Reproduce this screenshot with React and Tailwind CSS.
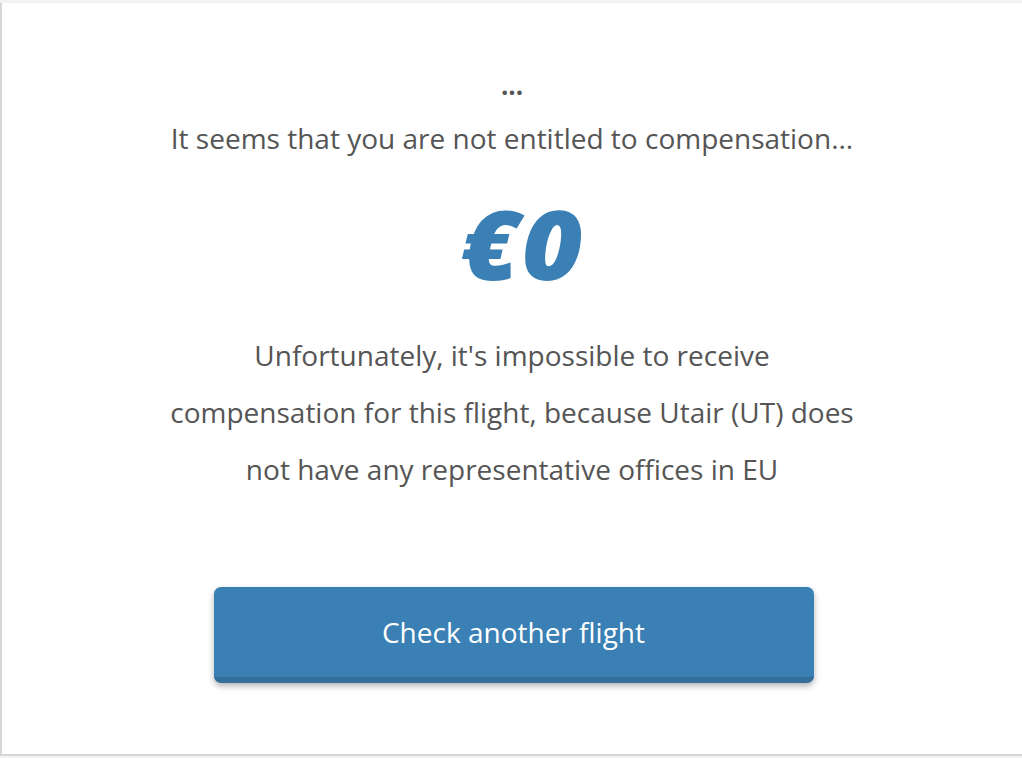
import React from 'react';

const App = () => {
  return (
    <div className="w-[1022px] h-[758px] bg-[#f3f3f3] pt-[3px] font-['Open_Sans',sans-serif]">
      <div className="h-[753px] bg-white border-l-2 border-b-2 border-[#d6d6d6] flex flex-col items-center">
        <div className="mt-[71px] text-[26px] font-bold leading-[22px] text-[#555]">...</div>
        <p className="mt-[23px] text-[28px] leading-[38px] text-[#555]">
          It seems that you are not entitled to compensation...
        </p>
        <div className="mt-[37px] h-[98px] ml-[20px] text-[95px] leading-[98px] font-extrabold italic tracking-[2px] scale-x-[1.1] text-[#3a80b5]">
          €0
        </div>
        <p className="mt-[35px] w-[686px] text-center text-[28px] leading-[57px] text-[#555]">
          Unfortunately, it's impossible to receive compensation for this flight, because Utair (UT) does not have any representative offices in EU
        </p>
        <button className="mt-[89px] ml-[3px] w-[600px] h-[96px] rounded-[7px] bg-[#3a80b5] border-b-[6px] border-[#346f9b] shadow-[0_3px_6px_rgba(0,0,0,0.3)] text-white text-[28px]">
          Check another flight
        </button>
      </div>
    </div>
  );
};

export default App;
